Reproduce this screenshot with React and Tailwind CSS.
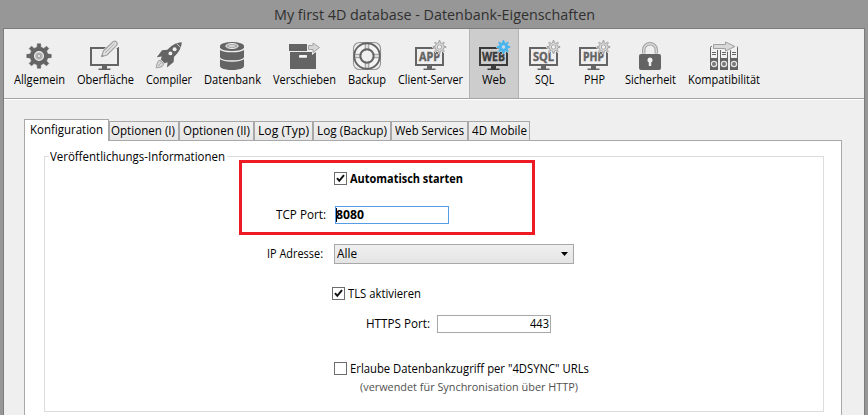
import { useLayoutEffect, useRef, useState } from "react";

// Single-line text condensed or widened so that it fills `w` pixels.
function Label({ w, className = "", children }) {
  const ref = useRef(null);
  const [scale, setScale] = useState(1);
  useLayoutEffect(() => {
    const range = document.createRange();
    range.selectNodeContents(ref.current);
    const drawn = range.getBoundingClientRect().width;
    setScale((previous) => (w * previous) / drawn);
  }, [w, children]);
  return (
    <span className={`flex shrink-0 whitespace-nowrap ${className}`} style={{ width: w }}>
      <span ref={ref} className="block w-max shrink-0 origin-left" style={{ transform: `scaleX(${scale})` }}>
        {children}
      </span>
    </span>
  );
}

function gearPath(cx, cy, teeth, outer, inner, outerFrac, innerFrac) {
  const pts = [];
  const step = (Math.PI * 2) / teeth;
  for (let i = 0; i < teeth; i++) {
    const a = i * step - Math.PI / 2;
    for (const [r, o] of [[inner, -innerFrac], [outer, -outerFrac], [outer, outerFrac], [inner, innerFrac]]) {
      pts.push(`${(cx + r * Math.cos(a + o * step)).toFixed(2)} ${(cy + r * Math.sin(a + o * step)).toFixed(2)}`);
    }
  }
  return `M${pts.join("L")}Z`;
}

const dark = "#646464";

function Gear() {
  return (
    <>
      <path d={gearPath(17, 17, 8, 12.3, 9, 0.17, 0.27)} fill={dark} stroke={dark} strokeWidth="0.6" strokeLinejoin="round" />
      <circle cx="17" cy="17" r="4.4" fill="#b4b4b4" stroke="#f0f0f0" strokeWidth="1.2" />
      <circle cx="17" cy="17" r="1.7" fill="#e0e0e0" stroke="#8a8a8a" strokeWidth="0.6" />
    </>
  );
}

function Screen({ color = dark }) {
  return (
    <>
      <rect x="3" y="9" width="27" height="17" fill="none" stroke={color} strokeWidth="2" />
      <path d="M14 27h5v2.500h3.500V31h-12v-1.500H14z" fill={color} />
    </>
  );
}

function Surface() {
  return (
    <>
      <Screen />
      <path d="M13 18L15 12L26 1.500L31 6.500L19 17Z" fill="#f0f0f0" stroke="#f0f0f0" strokeWidth="1.500" />
      <path d="M13.600 17.600L15.400 12L24.800 3Q26.800 1.400 28.400 3Q30 4.800 28.600 6.400L19 16Z" fill="#e2e2e2" stroke="#a2a2a2" strokeWidth="1.200" strokeLinejoin="round" />
      <path d="M17 14L26.500 4.800" stroke="#a2a2a2" strokeWidth="0.9" />
      <path d="M13.400 17.800l.8-2.300 1.500 1.500z" fill="#8c8c8c" />
    </>
  );
}

function Rocket() {
  return (
    <>
      <path d="M29.800 3.200C24 3.600 19.600 6 15.400 10.800L10 11.300L4.800 18.200L9.800 17.400L8.800 20.600L12.600 24.200L15.600 23.200L15 28.600L21.600 23L22 17.800C26.800 13.400 29.400 9 29.800 3.200Z" fill={dark} />
      <path d="M24.600 4.600l4 3.900" stroke="#f0f0f0" strokeWidth="0.8" />
      <circle cx="22.600" cy="10.300" r="2" fill="#f0f0f0" />
      <circle cx="18.400" cy="14.400" r="1.900" fill="#f0f0f0" />
      <path d="M8 21.300C5.200 22 4.600 25.400 4.300 28.800C7.800 28.600 11 27.800 11.600 24.800Z" fill="#d8d8d8" stroke="#a8a8a8" strokeWidth="1.100" />
      <path d="M6 27l3-3" stroke="#aaaaaa" strokeWidth="1" />
    </>
  );
}

function Database() {
  return (
    <>
      <path d="M5 7v20c0 2.400 5.400 4 12 4s12-1.600 12-4V7z" fill={dark} />
      <ellipse cx="17" cy="7" rx="12" ry="4" fill={dark} />
      <ellipse cx="17" cy="7" rx="6.200" ry="2.500" fill="#aaaaaa" stroke="#efefef" strokeWidth="1" />
      <ellipse cx="17" cy="7" rx="3.200" ry="1.100" fill="#d8d8d8" />
      <path d="M4.500 9.500c2 2.500 7 3.200 12.500 3.200s10.500-.7 12.500-3.200M4.500 18.800c2 2.500 7 3.200 12.500 3.200s10.500-.7 12.500-3.200" fill="none" stroke="#f0f0f0" strokeWidth="1.300" />
    </>
  );
}

function Box() {
  return (
    <>
      <path d="M1 5h18v7H1zM2 13h26v17H2z" fill={dark} />
      <rect x="11" y="16" width="8" height="2.700" rx="0.6" fill="#f4f4f4" />
      <path d="M20.500 6.500h5V4.300L31.500 8.500L25.500 13V10.500h-5z" fill="#d6d6d6" stroke="#f0f0f0" strokeWidth="3" />
      <path d="M20.500 6.500h4.500V4L31.500 8.500L25 13.500V10.500h-4.500z" fill="#d6d6d6" stroke="#a4a4a4" strokeWidth="1" />
    </>
  );
}

function Lifebuoy() {
  return (
    <>
      <rect x="3.500" y="3.500" width="27" height="27" rx="6" fill="none" stroke="#969696" strokeWidth="1.100" />
      <circle cx="17" cy="17" r="9.700" fill="none" stroke="#f3f3f3" strokeWidth="5.600" />
      <path d="M17 4v8M17 22v8M4 17h8M22 17h8" stroke="#a8a8a8" strokeWidth="4.600" />
      <path d="M17 4v8M17 22v8M4 17h8M22 17h8" stroke="#dedede" strokeWidth="2" />
      <circle cx="17" cy="17" r="12.800" fill="none" stroke={dark} strokeWidth="1.900" />
      <circle cx="17" cy="17" r="6.700" fill="none" stroke={dark} strokeWidth="2" />
    </>
  );
}

function ServerScreen({ text, active = false }) {
  const back = active ? "#cdcdcd" : "#f0f0f0";
  const color = active ? "#3a3a3a" : dark;
  const len = text === "WEB" ? 23 : 21;
  return (
    <>
      <Screen color={color} />
      <text x="16.500" y="22" textAnchor="middle" textLength={len} lengthAdjust="spacingAndGlyphs" fill={color} stroke={color} strokeWidth="0.4" className="font-['Open_Sans',sans-serif] text-[12px] font-bold">
        {text}
      </text>
      <path d={gearPath(26.500, 8, 8, 6.800, 4.800, 0.2, 0.28)} fill={back} stroke={back} strokeWidth="1" />
      <path d={gearPath(26.500, 8, 8, 6.400, 4.200, 0.1, 0.25)} fill={active ? "#45b4ee" : "#dcdcdc"} stroke={active ? "#45b4ee" : "#a0a0a0"} strokeWidth="1" strokeLinejoin="round" />
      <circle cx="26.500" cy="8" r="2.200" fill={active ? "#c9dce6" : "#f0f0f0"} stroke={active ? "#45b4ee" : "#a0a0a0"} strokeWidth="0.900" />
    </>
  );
}

function Lock() {
  return (
    <>
      <path d="M10.700 14.500V11a6.300 6.300 0 0 1 12.600 0v3.500" fill="none" stroke="#a0a0a0" strokeWidth="3.400" />
      <path d="M10.700 14V11a6.300 6.300 0 0 1 12.600 0v3" fill="none" stroke="#dadada" strokeWidth="1.400" />
      <rect x="6" y="15" width="22" height="16" rx="2" fill={dark} />
      <path d="M17 18.500a2.600 2.600 0 0 1 1.200 4.900V27h-2.400v-3.600A2.600 2.600 0 0 1 17 18.500z" fill="#f2f2f2" />
    </>
  );
}

function Binders() {
  return (
    <>
      {[3, 13, 23].map((x) => (
        <g key={x}>
          <rect x={x + 0.5} y="7.500" width="7" height="23" rx="0.8" fill="#f2f2f2" stroke={dark} />
          <path d={`M${x} 19h8V31h-8z`} fill={dark} />
          <path d={`M${x + 2} 13.500h4M${x + 2} 15.500h4`} stroke={dark} />
          <circle cx={x + 4} cy="25" r="2.600" fill="#777" stroke="#e6e6e6" strokeWidth="1.200" />
        </g>
      ))}
      <path d="M5 4h14V1.500L30.500 7.500L20 13V11H5z" fill="#f0f0f0" />
      <path d="M6.500 5.500h12V3L28 7.500L18.500 12V9.500h-12z" fill="#d9d9d9" stroke="#a0a0a0" />
    </>
  );
}

const tools = [
  { name: "Allgemein", w: 51, cell: "w-[63px]", pad: "ml-[14px]", icon: <Gear /> },
  { name: "Oberfläche", w: 57, cell: "w-[69px]", pad: "ml-[17px]", icon: <Surface /> },
  { name: "Compiler", w: 46, cell: "w-[58px]", pad: "ml-[12px]", icon: <Rocket /> },
  { name: "Datenbank", w: 57, cell: "w-[69px]", pad: "ml-[17px]", icon: <Database /> },
  { name: "Verschieben", w: 63, cell: "w-[75px]", pad: "ml-[21px]", icon: <Box /> },
  { name: "Backup", w: 38, cell: "w-[50px]", pad: "ml-[8px]", icon: <Lifebuoy /> },
  { name: "Client-Server", w: 65, cell: "w-[77px]", pad: "ml-[21px]", icon: <ServerScreen text="APP" /> },
  { name: "Web", w: 24, cell: "w-[50px] bg-[#cdcdcd] shadow-[inset_1px_0_#b4b4b4,inset_-1px_0_#b4b4b4]", pad: "ml-[8px]", icon: <ServerScreen text="WEB" active /> },
  { name: "SQL", w: 19, cell: "w-[50px]", pad: "ml-[8px]", icon: <ServerScreen text="SQL" /> },
  { name: "PHP", w: 21, cell: "w-[50px]", pad: "ml-[8px]", icon: <ServerScreen text="PHP" /> },
  { name: "Sicherheit", w: 51, cell: "w-[63px]", pad: "ml-[14px]", icon: <Lock /> },
  { name: "Kompatibilität", w: 72, cell: "w-[84px]", pad: "ml-[25px]", icon: <Binders /> },
];

const tabs = [
  { name: "Optionen (I)", w: 64, cell: "w-[70px] pl-px" },
  { name: "Optionen (II)", w: 67, cell: "w-[75px] pl-[3px]" },
  { name: "Log (Typ)", w: 51, cell: "w-[59px] pl-[3px]" },
  { name: "Log (Backup)", w: 70, cell: "w-[78px] pl-[3px]" },
  { name: "Web Services", w: 69, cell: "w-[77px] pl-[3px]" },
  { name: "4D Mobile", w: 55, cell: "w-[62px] pl-[3px]" },
];

function Checkbox({ checked = false }) {
  return (
    <span className="mb-[2px] flex size-[13px] shrink-0 items-center justify-center border border-[#6c6c6c] bg-white">
      {checked && (
        <svg width="11" height="11" viewBox="0 0 11 11">
          <path d="M2 5.200L4.300 7.800L9 2.200" fill="none" stroke="#111" strokeWidth="2" />
        </svg>
      )}
    </span>
  );
}

export default function App() {
  return (
    <div className="flex h-[415px] w-[868px] flex-col overflow-hidden bg-[#979797] font-['Open_Sans','Noto_Sans',sans-serif] text-[12px] leading-4 text-black">
      <header className="flex h-[28px] shrink-0 justify-center text-[15px] leading-[28px] text-[#303030]">
        <Label w={321}>My first 4D database - Datenbank-Eigenschaften</Label>
      </header>

      <div className="mx-[3px] flex grow flex-col border-x border-t border-[#7c7c7c] bg-[#efefef]">
        <nav className="flex h-[70px] shrink-0 border-b border-[#a5a5a5] pl-1">
          {tools.map((t) => (
            <div key={t.name} className={`flex shrink-0 flex-col pt-[10px] ${t.cell}`}>
              <svg width="34" height="34" viewBox="0 0 34 34" className={`shrink-0 ${t.pad}`}>{t.icon}</svg>
              <div className="-mt-px flex justify-center">
                <Label w={t.w}>{t.name}</Label>
              </div>
            </div>
          ))}
        </nav>
        <div className="h-px shrink-0 bg-white" />

        <main className="flex grow flex-col pt-[19px] pr-[22px] pl-[20px]">
          <div className="flex h-[21px] shrink-0 items-end">
            <div className="z-10 -mb-px flex h-[22px] w-[85px] border border-b-0 border-[#a8a8a8] bg-white pt-[2px] pl-[5px]">
              <Label w={73}>Konfiguration</Label>
            </div>
            {tabs.map((t) => (
              <div key={t.name} className={`flex h-[19px] border border-b-0 border-[#a8a8a8] bg-gradient-to-b from-[#f0f0f0] to-[#e6e6e6] pt-px ${t.cell}`}>
                <Label w={t.w}>{t.name}</Label>
              </div>
            ))}
          </div>

          <section className="grow border-x border-t border-[#a8a8a8] bg-white pt-[15px] pr-[17px] pl-[19px]">
            <div className="relative h-[256px] border border-[#dcdcdc]">
              <div className="-mt-[8px] ml-[4px] flex h-4 w-[178px] bg-white pl-px">
                <Label w={175}>Veröffentlichungs-Informationen</Label>
              </div>
              <div className="-mt-px flex h-[30px] items-center gap-[3px] pl-[289px]">
                <Checkbox checked />
                <Label w={113} className="font-bold">Automatisch starten</Label>
              </div>
              <div className="mt-[12px] flex h-[18px] items-center pl-[231px]">
                <Label w={50}>TCP Port:</Label>
                <div className="ml-[9px] flex h-[18px] w-[114px] items-center border border-[#569de5] font-bold">
                  <span className="-mr-px h-[14px] w-px bg-black" />
                  <Label w={28}>8080</Label>
                </div>
              </div>
              <div className="mt-[20px] flex h-[20px] items-center pl-[222px]">
                <Label w={56}>IP Adresse:</Label>
                <div className="ml-[11px] flex h-[20px] w-[240px] items-center justify-between border border-[#a8a8a8] bg-gradient-to-b from-[#f0f0f0] to-[#e4e4e4] pr-[5px] pl-[2px]">
                  <Label w={20}>Alle</Label>
                  <svg width="7" height="4" viewBox="0 0 7 4"><path d="M0 0h7L3.500 4z" /></svg>
                </div>
              </div>
              <div className="mt-[20px] flex h-[20px] items-center gap-[3px] pl-[287px]">
                <Checkbox checked />
                <Label w={73}>TLS aktivieren</Label>
              </div>
              <div className="mt-[11px] flex h-[18px] items-center pl-[321px]">
                <Label w={64}>HTTPS Port:</Label>
                <div className="ml-[7px] flex h-[18px] w-[114px] items-center justify-end border border-[#a8a8a8] pr-px">
                  <Label w={19}>443</Label>
                </div>
              </div>
              <div className="mt-[26px] flex h-[20px] items-center gap-[3px] pl-[289px]">
                <Checkbox />
                <Label w={239}>Erlaube Datenbankzugriff per "4DSYNC" URLs</Label>
              </div>
              <div className="flex pl-[315px] text-[11px] text-[#505050]">
                <Label w={218}>(verwendet für Synchronisation über HTTP)</Label>
              </div>
              {/* highlight frame over the port settings */}
              <div className="absolute top-[3px] left-[194px] h-[75px] w-[296px] border-[3px] border-[#ed1c24]" />
            </div>
          </section>
        </main>
      </div>
    </div>
  );
}
